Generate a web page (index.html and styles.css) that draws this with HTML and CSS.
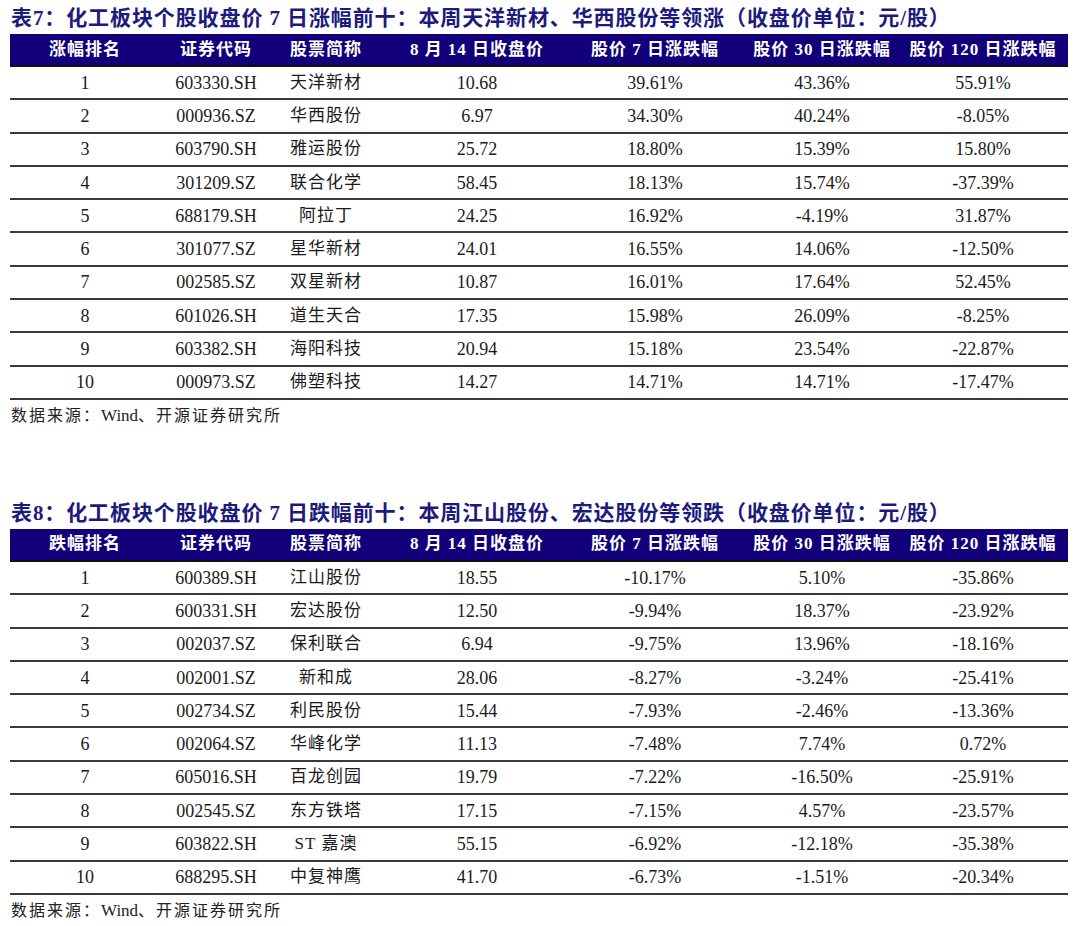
FILE: index.html
```html
<!DOCTYPE html>
<html lang="zh-CN">
<head>
<meta charset="utf-8">
<title>化工板块个股涨跌幅</title>
<link rel="stylesheet" href="styles.css">
</head>
<body>
<div class="page">
  <section class="block">
    <h2 class="title">表7：化工板块个股收盘价 7 日涨幅前十：本周天洋新材、华西股份等领涨（收盘价单位：元/股）</h2>
    <div class="table">
      <div class="row head">
        <div class="c">涨幅排名</div><div class="c">证券代码</div><div class="c">股票简称</div><div class="c">8 月 14 日收盘价</div><div class="c">股价 7 日涨跌幅</div><div class="c">股价 30 日涨跌幅</div><div class="c last">股价 120 日涨跌幅</div>
      </div>
      <div class="row"><div class="c">1</div><div class="c">603330.SH</div><div class="c name">天洋新材</div><div class="c">10.68</div><div class="c">39.61%</div><div class="c">43.36%</div><div class="c last">55.91%</div></div>
      <div class="row"><div class="c">2</div><div class="c">000936.SZ</div><div class="c name">华西股份</div><div class="c">6.97</div><div class="c">34.30%</div><div class="c">40.24%</div><div class="c last">-8.05%</div></div>
      <div class="row"><div class="c">3</div><div class="c">603790.SH</div><div class="c name">雅运股份</div><div class="c">25.72</div><div class="c">18.80%</div><div class="c">15.39%</div><div class="c last">15.80%</div></div>
      <div class="row"><div class="c">4</div><div class="c">301209.SZ</div><div class="c name">联合化学</div><div class="c">58.45</div><div class="c">18.13%</div><div class="c">15.74%</div><div class="c last">-37.39%</div></div>
      <div class="row"><div class="c">5</div><div class="c">688179.SH</div><div class="c name">阿拉丁</div><div class="c">24.25</div><div class="c">16.92%</div><div class="c">-4.19%</div><div class="c last">31.87%</div></div>
      <div class="row"><div class="c">6</div><div class="c">301077.SZ</div><div class="c name">星华新材</div><div class="c">24.01</div><div class="c">16.55%</div><div class="c">14.06%</div><div class="c last">-12.50%</div></div>
      <div class="row"><div class="c">7</div><div class="c">002585.SZ</div><div class="c name">双星新材</div><div class="c">10.87</div><div class="c">16.01%</div><div class="c">17.64%</div><div class="c last">52.45%</div></div>
      <div class="row"><div class="c">8</div><div class="c">601026.SH</div><div class="c name">道生天合</div><div class="c">17.35</div><div class="c">15.98%</div><div class="c">26.09%</div><div class="c last">-8.25%</div></div>
      <div class="row"><div class="c">9</div><div class="c">603382.SH</div><div class="c name">海阳科技</div><div class="c">20.94</div><div class="c">15.18%</div><div class="c">23.54%</div><div class="c last">-22.87%</div></div>
      <div class="row"><div class="c">10</div><div class="c">000973.SZ</div><div class="c name">佛塑科技</div><div class="c">14.27</div><div class="c">14.71%</div><div class="c">14.71%</div><div class="c last">-17.47%</div></div>
    </div>
    <p class="source">数据来源：<span class="latin">Wind</span>、开源证券研究所</p>
  </section>

  <section class="block second">
    <h2 class="title">表8：化工板块个股收盘价 7 日跌幅前十：本周江山股份、宏达股份等领跌（收盘价单位：元/股）</h2>
    <div class="table">
      <div class="row head">
        <div class="c">跌幅排名</div><div class="c">证券代码</div><div class="c">股票简称</div><div class="c">8 月 14 日收盘价</div><div class="c">股价 7 日涨跌幅</div><div class="c">股价 30 日涨跌幅</div><div class="c last">股价 120 日涨跌幅</div>
      </div>
      <div class="row"><div class="c">1</div><div class="c">600389.SH</div><div class="c name">江山股份</div><div class="c">18.55</div><div class="c">-10.17%</div><div class="c">5.10%</div><div class="c last">-35.86%</div></div>
      <div class="row"><div class="c">2</div><div class="c">600331.SH</div><div class="c name">宏达股份</div><div class="c">12.50</div><div class="c">-9.94%</div><div class="c">18.37%</div><div class="c last">-23.92%</div></div>
      <div class="row"><div class="c">3</div><div class="c">002037.SZ</div><div class="c name">保利联合</div><div class="c">6.94</div><div class="c">-9.75%</div><div class="c">13.96%</div><div class="c last">-18.16%</div></div>
      <div class="row"><div class="c">4</div><div class="c">002001.SZ</div><div class="c name">新和成</div><div class="c">28.06</div><div class="c">-8.27%</div><div class="c">-3.24%</div><div class="c last">-25.41%</div></div>
      <div class="row"><div class="c">5</div><div class="c">002734.SZ</div><div class="c name">利民股份</div><div class="c">15.44</div><div class="c">-7.93%</div><div class="c">-2.46%</div><div class="c last">-13.36%</div></div>
      <div class="row"><div class="c">6</div><div class="c">002064.SZ</div><div class="c name">华峰化学</div><div class="c">11.13</div><div class="c">-7.48%</div><div class="c">7.74%</div><div class="c last">0.72%</div></div>
      <div class="row"><div class="c">7</div><div class="c">605016.SH</div><div class="c name">百龙创园</div><div class="c">19.79</div><div class="c">-7.22%</div><div class="c">-16.50%</div><div class="c last">-25.91%</div></div>
      <div class="row"><div class="c">8</div><div class="c">002545.SZ</div><div class="c name">东方铁塔</div><div class="c">17.15</div><div class="c">-7.15%</div><div class="c">4.57%</div><div class="c last">-23.57%</div></div>
      <div class="row"><div class="c">9</div><div class="c">603822.SH</div><div class="c name">ST 嘉澳</div><div class="c">55.15</div><div class="c">-6.92%</div><div class="c">-12.18%</div><div class="c last">-35.38%</div></div>
      <div class="row"><div class="c">10</div><div class="c">688295.SH</div><div class="c name">中复神鹰</div><div class="c">41.70</div><div class="c">-6.73%</div><div class="c">-1.51%</div><div class="c last">-20.34%</div></div>
    </div>
    <p class="source">数据来源：<span class="latin">Wind</span>、开源证券研究所</p>
  </section>
</div>
</body>
</html>
```

FILE: styles.css
```css
html, body {
  margin: 0;
  padding: 0;
  background: #ffffff;
}

body {
  font-family: "Liberation Serif", "Noto Sans CJK SC", serif;
  color: #1a1a1a;
}

.page {
  width: 1080px;
  box-sizing: border-box;
  padding: 0 12px 0 10px;
}

.block.second {
  margin-top: 63px;
}

.title {
  margin: 0;
  height: 34px;
  box-sizing: border-box;
  padding-top: 2px;
  padding-left: 1px;
  line-height: 32px;
  font-size: 21px;
  font-weight: 700;
  letter-spacing: 0.9px;
  color: #1c1a7c;
  white-space: nowrap;
}

.table {
  display: flex;
  flex-direction: column;
}

.row {
  display: grid;
  grid-template-columns: 150px 112px 108px 194px 162px 172px 160px;
  height: 33.3px;
  box-sizing: border-box;
  border-bottom: 2px solid #3a3a3a;
  align-items: center;
  font-size: 18px;
}

.row.head {
  height: 33px;
  background: #11007a;
  color: #ffffff;
  font-size: 17px;
  font-weight: 700;
  letter-spacing: 1px;
  border-bottom: 2px solid #111111;
}

.c {
  text-align: center;
  white-space: nowrap;
  line-height: 20px;
}

.c.last {
  padding-right: 10px;
}

.c.name {
  font-size: 17px;
  letter-spacing: 1px;
}

.source {
  margin: 0;
  height: 32px;
  line-height: 32px;
  font-size: 16px;
  letter-spacing: 2px;
  color: #222222;
  padding-left: 1px;
}

.source .latin {
  font-size: 17px;
  letter-spacing: 0;
}
```
